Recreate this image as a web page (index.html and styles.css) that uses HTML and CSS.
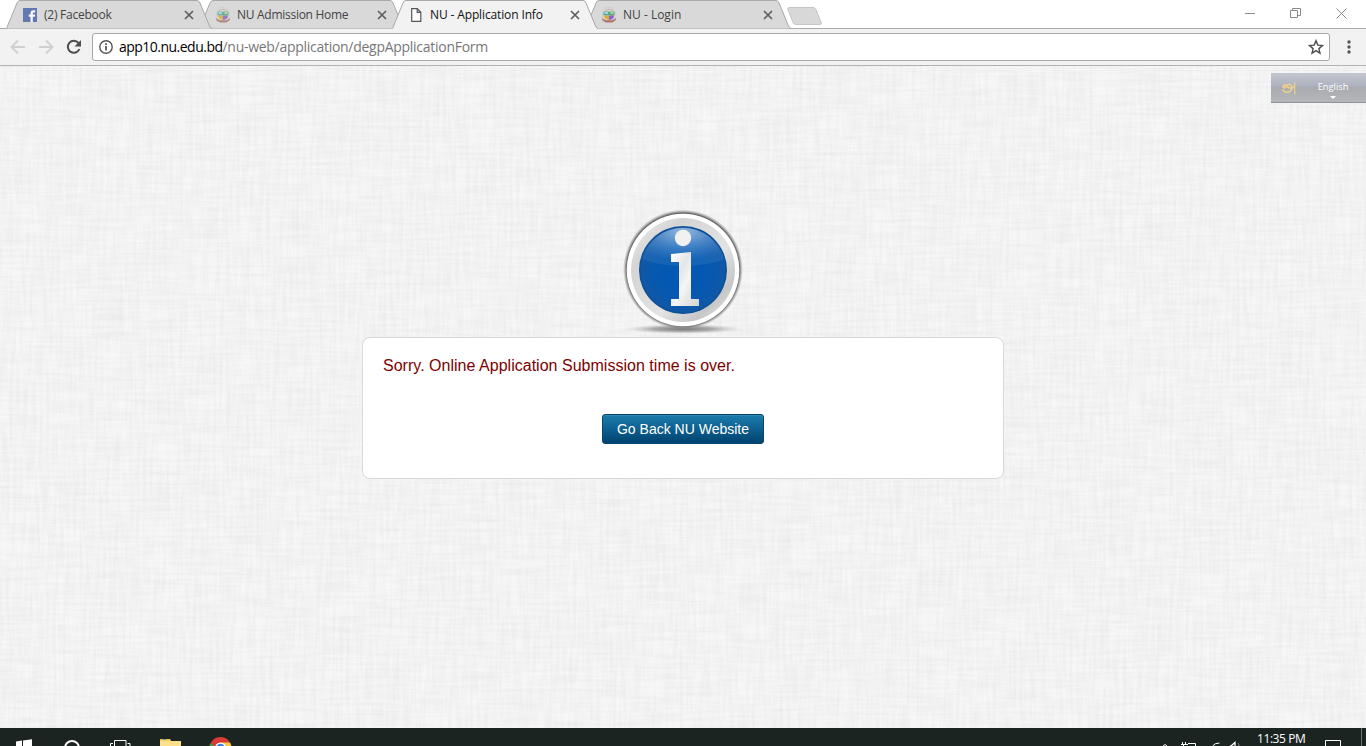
FILE: index.html
```html
<!DOCTYPE html>
<html lang="en">
<head>
<meta charset="utf-8">
<title>NU - Application Info</title>
<link rel="stylesheet" href="styles.css">
</head>
<body>
<svg class="defs" width="0" height="0" aria-hidden="true">
  <defs>
    <symbol id="tab-shape" viewBox="0 0 206 29">
      <path d="M0 28.5 C1 28 1 27.500 1.500 26 L11 3 Q12 .5 14 .5 H191 Q193 .5 194 3 L203.500 26 Q204.500 28.500 206 28.500"/>
    </symbol>
    <symbol id="close" viewBox="0 0 10 10"><path d="M1 1 9 9M9 1 1 9" fill="none" stroke="#5e5e5e" stroke-width="1.7"/></symbol>
    <symbol id="crest" viewBox="0 0 16 16">
      <circle cx="8" cy="7" r="6.500" fill="#e3dfdd" stroke="#c9c4c2" stroke-width=".7"/>
      <path d="M4 3.500Q8 1 12 3.500" fill="none" stroke="#b9aaa8"/>
      <path d="M2.500 4.500H8V8.500H2.500z" fill="#46a9a4"/><path d="M8 4.500h5.500V8.500H8z" fill="#5aa865"/>
      <path d="M3 8.500h5v4.500Q3 12 3 8.500z" fill="#d8ac35"/><path d="M8 8.500h5q0 4-5 4.500z" fill="#8a62c8"/>
      <path d="M3.500 6h3.500M9.500 6h3" stroke="#fff" stroke-width="1.200"/>
      <path d="M.8 10.500Q2 12.800 5 13.200h6Q14 12.800 15.200 10.500L14.500 13.500 11 15.500H5L1.500 13.500z" fill="#ad7468"/>
    </symbol>
  </defs>
</svg>

<header class="tabs">
  <div class="tab tab-first">
    <svg class="shape"><use href="#tab-shape"/></svg>
    <svg class="fav faded" viewBox="0 0 14 14"><path fill="#4561a8" d="M0 0h14v14H0z"/><path fill="#fff" d="M7.500 14V8.700H5.700V6.500h1.800V5q0-2.700 2.800-2.700h1.900v2.200h-1.300q-1.100 0-1.100 1v1h2.400l-.3 2.200H9.800V14z"/></svg>
    <span class="title t1">(2) Facebook</span>
    <svg class="x"><use href="#close"/></svg>
  </div>
  <div class="tab tab-second">
    <svg class="shape"><use href="#tab-shape"/></svg>
    <svg class="fav crest faded"><use href="#crest"/></svg>
    <span class="title t2">NU Admission Home</span>
    <svg class="x"><use href="#close"/></svg>
  </div>
  <div class="tab active">
    <svg class="shape"><use href="#tab-shape"/></svg>
    <svg class="fav" viewBox="0 0 14 14"><path d="M2.700.7h5.600l3.500 3.600v9H2.700z M8.200.7v3.700h3.600" fill="#fff" stroke="#555" stroke-width="1.200"/></svg>
    <span class="title t3">NU - Application Info</span>
    <svg class="x"><use href="#close"/></svg>
  </div>
  <div class="tab tab-last">
    <svg class="shape"><use href="#tab-shape"/></svg>
    <svg class="fav crest"><use href="#crest"/></svg>
    <span class="title t4">NU - Login</span>
    <svg class="x"><use href="#close"/></svg>
  </div>
  <svg class="newtab" viewBox="0 0 36 19"><path d="M3 .5H26Q28 .5 29 2.500L34 15Q35 17.500 33 17.500H9Q7 17.500 6 15.500L1 3Q0 .5 3 .5z" fill="#d8d8d8" stroke="#c5c5c5"/></svg>
  <svg class="winbtns" viewBox="0 0 120 28">
    <g fill="none" stroke="#8a8a8a"><path d="M4 13.500h10M49.500 10.500h7v7h-7zM51.500 10.500v-2h8v7h-3M95.500 8.500l10 10M105.500 8.500l-10 10"/></g>
  </svg>
</header>

<nav class="toolbar">
  <svg class="nav" viewBox="0 0 92 36">
    <g fill="none" stroke="#cfcfcf" stroke-width="1.800">
      <path d="M25 18H12M18 11.500 11.500 18l6.500 6.500M39 18h13M46 11.500l6.500 6.500-6.500 6.500"/>
      <path d="M78.500 14A6 6 0 1 0 79.400 20" stroke="#4d4d4d" stroke-width="2"/>
    </g>
    <path d="M81 11v6.500h-6.500z" fill="#4d4d4d"/>
  </svg>
  <div class="omnibox">
    <svg class="info" viewBox="0 0 14 14"><circle cx="7" cy="7" r="6.200" fill="none" stroke="#555" stroke-width="1.400"/><path d="M6.200 6h1.600v4.500H6.200zM6.200 3.300h1.600v1.600H6.200z" fill="#444"/></svg>
    <span class="host">app10.nu.edu.bd</span><span class="path">/nu-web/application/degpApplicationForm</span>
    <svg class="star" viewBox="0 0 16 16"><path d="M8 1.700l1.800 4.400 4.700.4-3.600 3.100 1.100 4.600L8 11.700l-4 2.500 1.100-4.600L1.500 6.500l4.700-.4z" fill="none" stroke="#4c4c4c" stroke-width="1.400"/></svg>
  </div>
  <svg class="more" viewBox="0 0 6 16"><g fill="#555"><circle cx="3" cy="3" r="1.700"/><circle cx="3" cy="8" r="1.700"/><circle cx="3" cy="13" r="1.700"/></g></svg>
</nav>

<main class="page">
  <svg class="linen" width="1366" height="662">
    <filter id="weft" x="0" y="0" width="100%" height="100%" color-interpolation-filters="sRGB">
      <feTurbulence type="fractalNoise" baseFrequency=".022 .3" numOctaves="3" seed="4"/>
      <feColorMatrix values="0 0 0 0 0  0 0 0 0 0  0 0 0 0 0  .055 0 0 0 -.018"/>
    </filter>
    <filter id="warp" x="0" y="0" width="100%" height="100%" color-interpolation-filters="sRGB">
      <feTurbulence type="fractalNoise" baseFrequency=".3 .022" numOctaves="3" seed="9"/>
      <feColorMatrix values="0 0 0 0 0  0 0 0 0 0  0 0 0 0 0  .055 0 0 0 -.018"/>
    </filter>
    <rect width="1366" height="662" fill="#f7f7f7"/>
    <rect width="1366" height="662" filter="url(#weft)"/>
    <rect width="1366" height="662" filter="url(#warp)"/>
  </svg>

  <div class="language">
    <svg class="letter" viewBox="0 0 16 16"><path d="M5.500 5.500C3 4 1 6.500 2.500 7.500S6 6 6 5.500M1.500 9.500C3 13 8 13 10 10.500S10.500 4 7.500 4.500 7 9 10 8L13.500 6.500" fill="none" stroke="#eccf8c" stroke-width="1.700"/><path d="M13.700 2v12.500" stroke="#e9cd92" stroke-width="1.300"/></svg>
    <div class="choice"><span>English</span><i class="caret"></i></div>
  </div>

  <svg class="badge" viewBox="0 0 126 128">
    <defs>
      <linearGradient id="ring" x1="0" y1="0" x2="1" y2="1"><stop stop-color="#f2f2f2"/><stop offset=".25" stop-color="#d4d4d4"/><stop offset=".6" stop-color="#e3e3e3"/><stop offset=".8" stop-color="#c7c7c7"/><stop offset="1" stop-color="#ededed"/></linearGradient>
      <radialGradient id="blue"><stop stop-color="#0058b5"/><stop offset=".7" stop-color="#0758af"/><stop offset=".94" stop-color="#1058a6"/><stop offset="1" stop-color="#0d4c90"/></radialGradient>
      <radialGradient id="shine" cx=".5" cy=".1" r=".75"><stop stop-color="#a6c6e6" stop-opacity=".9"/><stop offset=".6" stop-color="#6ea0d5" stop-opacity=".5"/><stop offset="1" stop-color="#3f7fc1" stop-opacity=".3"/></radialGradient>
      <linearGradient id="glyph" x1="0" y1="0" x2="1" y2="1"><stop stop-color="#fff"/><stop offset=".35" stop-color="#e5e5e5"/><stop offset=".55" stop-color="#f5f5f5"/><stop offset="1" stop-color="#d2d2d2"/></linearGradient>
      <radialGradient id="shadow"><stop stop-color="#777"/><stop offset=".5" stop-color="#999" stop-opacity=".8"/><stop offset="1" stop-color="#ccc" stop-opacity="0"/></radialGradient>
      <radialGradient id="halo"><stop offset=".94" stop-color="#666"/><stop offset="1" stop-color="#999" stop-opacity="0"/></radialGradient>
    </defs>
    <ellipse cx="63" cy="121" rx="60" ry="5" fill="url(#shadow)"/>
    <circle cx="63" cy="61.500" r="60" fill="url(#halo)"/>
    <circle cx="63" cy="62" r="56.300" fill="#fff"/>
    <circle cx="63" cy="62" r="52" fill="url(#ring)"/>
    <circle cx="63" cy="62" r="44" fill="url(#blue)"/>
    <path d="M22 51A42.500 42.500 0 0 1 104 51Q87 58 63 58T22 51z" fill="url(#shine)"/>
    <circle cx="63" cy="30" r="8.200" fill="#f1f1f1"/>
    <path d="M51 46 71 44V91H79V98H51V91H59V54H51z" fill="url(#glyph)"/>
  </svg>

  <section class="panel">
    <p class="message">Sorry. Online Application Submission time is over.</p>
    <button class="back">Go Back NU Website</button>
  </section>
</main>

<footer class="taskbar">
  <svg class="apps" viewBox="0 0 260 18">
    <path d="M16 13.500 22 12.500V18H16zM23 12.400 32 11.300V18H23z" fill="#fff"/>
    <circle cx="72" cy="20" r="7" fill="none" stroke="#fff" stroke-width="2"/>
    <path d="M114.500 18V12.500H126V18M113 15.500H110.500V18M127.500 15.500H130V18" fill="none" stroke="#fff"/>
    <path d="M160 11h10l1 2h10v5h-21z" fill="#ffe08a"/><path d="M160 11h9.500l.8 1.500H160z" fill="#eebd3b"/><path d="M163 11.500h3" stroke="#4e9bd0"/>
    <circle cx="220.500" cy="20" r="11" fill="#d93b34"/><path d="M210 15.500 214.500 18H209.500z" fill="#2ba24c"/><path d="M221 14.500h9L231.500 18H222z" fill="#f6c944"/><circle cx="220.500" cy="20" r="5.500" fill="#fff"/><circle cx="220.500" cy="20" r="4.300" fill="#3c7ce0"/>
  </svg>
  <svg class="tray" viewBox="0 0 100 18">
    <g fill="none" stroke="#fff"><path d="M23 18l2-1.500 2 1.500M42.500 16v-2M45.500 16v-2M41 16.500h7M43.500 17v1M48 15.500h7.500V18M72.500 18q2-3 7-3"/><path d="M90 18h1l4-3.500V18" stroke-width="1.300"/><path d="M98 15q1 1 1 3" stroke="#888"/></g>
  </svg>
  <span class="clock">11:35 PM</span>
  <svg class="notice" viewBox="0 0 60 18"><path d="M19.500 18V12.500h15V18" fill="none" stroke="#fff"/><path d="M55.500 0v18" stroke="#6e7472"/></svg>
</footer>
</body>
</html>
```
FILE: styles.css
```css
* { box-sizing: border-box; }
body { margin: 0; width: 1366px; height: 746px; overflow: hidden; display: flex; flex-direction: column; background: #fff; font-family: "Open Sans", "Noto Sans", sans-serif; }
svg { display: block; flex: none; }
.defs { position: absolute; }

.tabs { height: 29px; flex: none; display: flex; padding-left: 6px; background: linear-gradient(#aaa, #aaa) 0 28px / 100% 1px no-repeat #fff; }
.tab { position: relative; isolation: isolate; width: 206px; height: 29px; margin-right: -13px; flex: none; display: flex; align-items: center; padding: 0 18px 0 17px; }
.tab-first { z-index: 3; }
.tab-second { z-index: 2; }
.active { z-index: 4; }
.tab-last { z-index: 1; }
.shape { position: absolute; inset: 0; z-index: -1; width: 206px; height: 29px; fill: #d9d9d9; stroke: #a8a8a8; }
.active .shape { fill: #f2f2f2; }
.active::after { content: ""; position: absolute; left: 1px; right: 1px; bottom: 0; height: 1px; background: #f2f2f2; }
.fav { width: 14px; height: 14px; margin-top: 1px; }
.crest { width: 16px; height: 16px; margin: 1px -1px 0; }
.faded { opacity: .8; }
.title { flex: 1; margin-left: 7px; font-size: 12px; line-height: 28px; white-space: nowrap; color: #444; }
.t1 { letter-spacing: -.25px; }
.t2 { letter-spacing: -.28px; }
.t3 { letter-spacing: -.13px; }
.active .title { color: #111; }
.x { width: 10px; height: 10px; margin-top: 1px; }
.newtab { width: 36px; height: 19px; margin: 7px 0 0 9px; }
.winbtns { width: 120px; height: 28px; margin-left: auto; margin-right: 5px; }

.toolbar { height: 37px; flex: none; display: flex; align-items: center; background: #f2f2f2; border-bottom: 1px solid #b2b2b2; }
.nav { width: 92px; height: 36px; }
.omnibox { width: 1238px; height: 28px; display: flex; align-items: center; padding: 0 6px; border: 1px solid #a6a6a6; border-radius: 3px; background: #fff; font-size: 14px; line-height: 26px; }
.info { width: 14px; height: 14px; margin-right: 6px; }
.host { color: #000; letter-spacing: -.52px; }
.path { color: #777; letter-spacing: -.28px; }
.star { width: 16px; height: 16px; margin-left: auto; margin-right: -1px; }
.more { width: 6px; height: 16px; margin-left: 16px; }

.page { position: relative; isolation: isolate; height: 662px; flex: none; display: flex; flex-direction: column; align-items: center; }
.linen { position: absolute; inset: 0; z-index: -1; }
.language { align-self: flex-end; width: 95px; height: 30px; margin-top: 7px; display: flex; align-items: center; padding-left: 10px; background: linear-gradient(#c4c7ce, #adb1bf 45%, #a9abb0 50%, #b5b6b9); border-bottom: 1px solid #8e929f; }
.letter { width: 16px; height: 16px; }
.choice { width: 32px; margin-left: 20px; display: flex; flex-direction: column; align-items: center; color: #fff; font-size: 9.3px; line-height: 12px; padding-top: 4px; }
.caret { border: 3px solid transparent; border-top-color: #fff; border-bottom: 0; margin-top: 3px; }
.badge { width: 126px; height: 128px; margin-top: 105px; }
.panel { width: 642px; height: 142px; margin-top: 1px; display: flex; flex-direction: column; align-items: center; padding: 18px 20px; background: #fff; border: 1px solid #d9d9d9; border-radius: 8px; font-family: "Liberation Sans", Arial, sans-serif; }
.message { align-self: flex-start; margin: 0; font-size: 16px; line-height: 20px; letter-spacing: .02px; color: #800000; white-space: nowrap; }
.back { width: 162px; height: 30px; margin: 38px 0 0; padding: 0; border: 1px solid #05466f; border-radius: 3px; background: linear-gradient(#1c7cad, #004370); box-shadow: inset 0 1px 0 #3187b3; color: #fff; font: 14px "Liberation Sans", Arial, sans-serif; white-space: nowrap; }

.taskbar { height: 18px; flex: none; display: flex; background: #1c2422; overflow: hidden; }
.apps { width: 260px; height: 18px; }
.tray { width: 100px; height: 18px; margin-left: auto; }
.clock { width: 66px; padding-left: 17px; color: #fff; font-size: 12px; line-height: 21px; letter-spacing: -.42px; white-space: nowrap; }
.notice { width: 60px; height: 18px; }
```
